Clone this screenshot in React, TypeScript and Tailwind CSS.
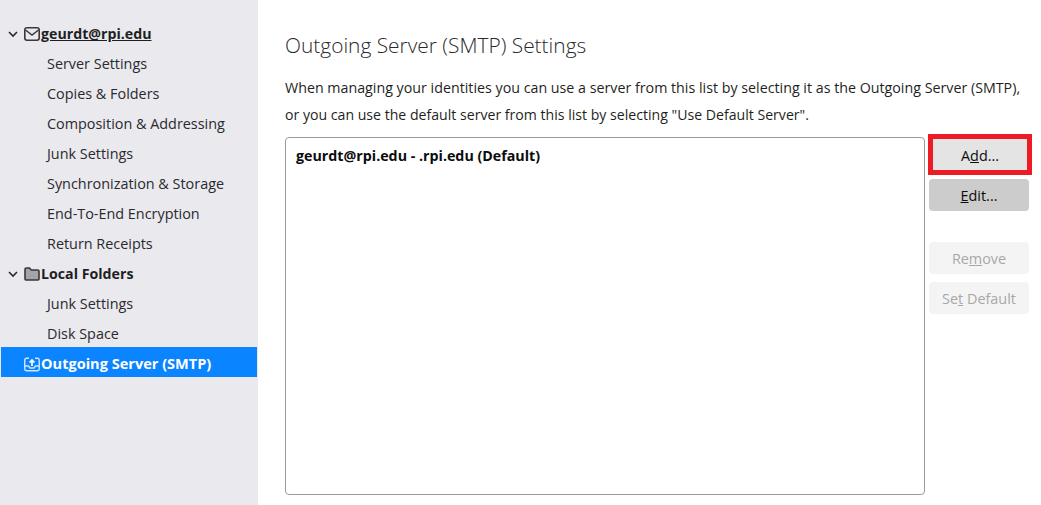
const font = { fontFamily: '"Open Sans", "Noto Sans", sans-serif' };

function Chevron() {
  return (
    <svg width="10" height="10" viewBox="0 0 10 10" className="shrink-0" fill="none">
      <path d="M1 3l4 4 4-4" stroke="#2a2a2e" strokeWidth="1.6" />
    </svg>
  );
}

function MailIcon() {
  return (
    <svg width="16" height="14" viewBox="0 0 16 14" className="shrink-0" fill="none">
      <rect x="0.8" y="0.8" width="14.4" height="12.4" rx="2.2" stroke="#38383d" strokeWidth="1.6" />
      <path d="M1.5 3l6.5 5 6.5-5" stroke="#38383d" strokeWidth="1.5" />
    </svg>
  );
}

function FolderIcon() {
  return (
    <svg width="16" height="14" viewBox="0 0 16 14" className="shrink-0">
      <path d="M1 12V2.2C1 1.5 1.5 1 2.2 1h3.3l1.8 2h6.5c.7 0 1.2.5 1.2 1.2V12c0 .6-.5 1-1 1H2c-.5 0-1-.4-1-1z" fill="#a4a4a8" stroke="#38383d" strokeWidth="1.6" />
    </svg>
  );
}

function OutboxIcon() {
  return (
    <svg width="16" height="15" viewBox="0 0 16 15" className="shrink-0" fill="none">
      <path d="M5 1.25H2.75a2 2 0 0 0-2 2v8.5a2 2 0 0 0 2 2h10.5a2 2 0 0 0 2-2v-8.5a2 2 0 0 0-2-2H11" stroke="#cfe7ff" strokeWidth="1.4" />
      <path d="M1 9h3.5l1.5 2h4l1.5-2H15" stroke="#cfe7ff" strokeWidth="1.4" />
      <path d="M8 9V3M5.5 5.5L8 3l2.5 2.5" stroke="#ffffff" strokeWidth="1.7" />
    </svg>
  );
}

const accountItems = [
  'Server Settings',
  'Copies & Folders',
  'Composition & Addressing',
  'Junk Settings',
  'Synchronization & Storage',
  'End-To-End Encryption',
  'Return Receipts',
];

const localItems = ['Junk Settings', 'Disk Space'];

function SubItem({ label }: { label: string }) {
  return <div className="h-[30px] pl-[46px] leading-[34px] text-[14.4px] text-[#2a2a2e]">{label}</div>;
}

function ActionButton({ children, className }: { children: React.ReactNode; className: string }) {
  return (
    <div className={`flex h-8 w-[100px] items-center justify-center rounded-[4px] pt-0.5 text-[14.4px] ${className}`}>
      {children}
    </div>
  );
}

export default function App() {
  return (
    <div className="flex h-[505px] w-[1041px] overflow-hidden bg-white" style={font}>
      <div className="w-[258px] shrink-0 bg-[#e9e9ee] pl-px pr-px pt-[17px]">
        <div className="flex h-[30px] items-center pl-[7px] pt-1 text-[14.2px] font-bold text-[#1f1f23]">
          <Chevron />
          <span className="ml-[6px]"><MailIcon /></span>
          <span className="ml-px underline">geurdt@rpi.edu</span>
        </div>
        {accountItems.map((item) => (
          <SubItem key={item} label={item} />
        ))}
        <div className="flex h-[30px] items-center pl-[7px] pt-1 text-[14.2px] font-bold text-[#1f1f23]">
          <Chevron />
          <span className="ml-[6px]"><FolderIcon /></span>
          <span className="ml-px">Local Folders</span>
        </div>
        {localItems.map((item) => (
          <SubItem key={item} label={item} />
        ))}
        <div className="flex h-[30px] items-center bg-[#0a84ff] pl-[23px] pt-1 text-[14.55px] font-bold text-white">
          <OutboxIcon />
          <span className="ml-px">Outgoing Server (SMTP)</span>
        </div>
      </div>

      <div className="flex-1 pl-[27px] pr-3 pt-[29px]">
        <h1 className="h-[32px] text-[20.9px] font-light leading-[32px] text-[#2a2a2e]">
          Outgoing Server (SMTP) Settings
        </h1>
        <p className="mt-[13px] w-[750px] text-[14.25px] leading-[27px] text-[#1f1f23]">
          When managing your identities you can use a server from this list by selecting it as the Outgoing Server (SMTP),
          <br />
          <span className="text-[14.12px]">or you can use the default server from this list by selecting "Use Default Server".</span>
        </p>
        <div className="mt-[9px] flex gap-1">
          <div className="h-[358px] w-[640px] rounded-[4px] border border-[#9a9a9a] px-[10px] py-[8px] text-[14.25px] font-bold leading-[20px] text-[#0c0c0d]">
            geurdt@rpi.edu - .rpi.edu (Default)
          </div>
          <div className="flex flex-col">
            <div className="-mt-[3px] -mr-[3px] -ml-[1px] border-[5px] border-[#ed1c24]">
              <div className="flex h-[31px] w-[94px] items-center justify-center bg-[#e4e4e4] pt-0.5 text-[14.4px] text-[#0c0c0d]">
                <span>A<u>d</u>d...</span>
              </div>
            </div>
            <ActionButton className="mt-[4px] bg-[#cccccc] text-[#0c0c0d]">
              <span><u>E</u>dit...</span>
            </ActionButton>
            <ActionButton className="mt-[31px] bg-[#f4f4f4] text-[#a8a8a8]">
              <span>Re<u>m</u>ove</span>
            </ActionButton>
            <ActionButton className="mt-2 bg-[#f4f4f4] text-[#a8a8a8]">
              <span>Se<u>t</u> Default</span>
            </ActionButton>
          </div>
        </div>
      </div>
    </div>
  );
}
